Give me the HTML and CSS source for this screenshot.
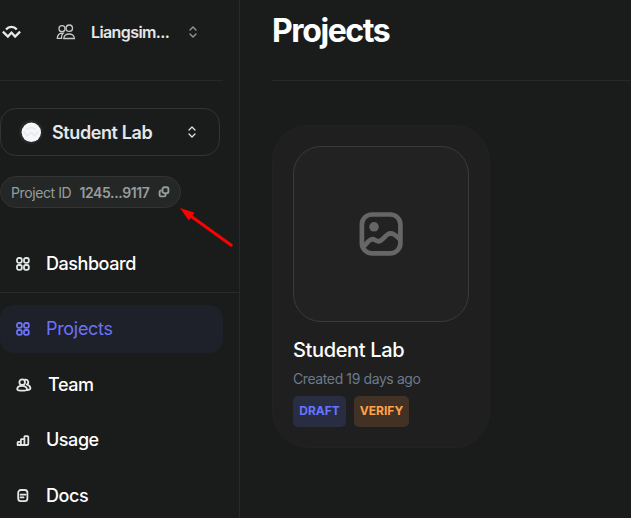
FILE: index.html
```html
<!DOCTYPE html>
<html lang="en">
<head>
<meta charset="utf-8">
<title>Projects</title>
<link rel="stylesheet" href="styles.css">
</head>
<body>
<svg class="defs" aria-hidden="true">
  <symbol id="updown" viewBox="0 0 8 12"><path d="M1 4 4 1l3 3M1 8l3 3 3-3"/></symbol>
  <symbol id="grid" viewBox="0 0 14 14"><rect x="1" y="1" width="4.8" height="4.8" rx="1.8"/><rect x="8" y="1" width="4.8" height="4.8" rx="1.8"/><rect x="1" y="8" width="4.8" height="4.8" rx="1.8"/><rect x="8" y="8" width="4.8" height="4.8" rx="1.8"/></symbol>
</svg>
<div class="app">
  <aside class="sidebar">
    <div class="account">
      <svg class="logo" viewBox="0 0 20 14"><path d="M5 4.5c3-3.600 7.800-3.600 10.800 0M1.900 6.600l5 5 3.600-4 3.600 4 5-5"/></svg>
      <svg class="people" viewBox="0 0 20 16"><circle cx="6" cy="4.7" r="3"/><circle cx="13.3" cy="4.2" r="3.2"/><path d="M7.800 14.500c0-6 10.600-6 10.600 0zM5.500 14.300H1.300c0-3.300 1.800-5.300 5.800-5.100-1.400 1.200-1.800 3.300-1.600 5.100z"/></svg>
      <span class="account-name">Liangsim...</span>
      <svg class="updown dim"><use href="#updown"/></svg>
    </div>
    <div class="selector">
      <svg class="avatar" viewBox="0 0 24 24"><circle class="ring" cx="12" cy="12" r="12"/><circle class="disc" cx="12.3" cy="12.3" r="9.7"/><path d="M7.5 9.7c2.6-2.6 6.4-2.6 9 0M4.5 11.5l4.2 4.2 3.3-3.2 3.3 3.2 4.2-4.2"/></svg>
      <span class="selector-name">Student Lab</span>
      <svg class="updown"><use href="#updown"/></svg>
    </div>
    <div class="pill">
      <span class="pill-label">Project ID</span>
      <span class="pill-value">1245...9117</span>
      <svg class="copy" viewBox="0 0 12 12"><rect x="4.5" y="1.3" width="5.900" height="5.900" rx="1.7"/><path d="M3.700 4.400H3.100A1.500 1.500 0 0 0 1.600 5.900v3a1.500 1.500 0 0 0 1.500 1.500h3A1.500 1.500 0 0 0 7.600 8.900v-1"/></svg>
      <svg class="arrow" viewBox="0 0 54 40"><path class="shaft" d="M51.300 37.200 11 8.200"/><path class="head" d="M0 0 14.500 4.800 8.800 12.500z"/></svg>
    </div>
    <div class="nav-top">
      <a class="item"><svg class="icon"><use href="#grid"/></svg><span class="label">Dashboard</span></a>
    </div>
    <nav class="nav">
      <a class="item active"><svg class="icon"><use href="#grid"/></svg><span class="label">Projects</span></a>
      <a class="item team"><svg class="icon wide" viewBox="0 0 16 14"><circle cx="6.2" cy="4.2" r="2.8"/><path d="M1.2 11.2c0-4.5 9.8-4.5 9.8 0 0 2-9.8 2-9.8 0zM9 1.6c3-.5 4.600 3.300 1.800 4.900 2.700.8 3.600 2.200 3.600 3.800 0 1-1 1.500-2.600 1.700"/></svg><span class="label">Team</span></a>
      <a class="item usage"><svg class="icon" viewBox="0 0 14 14"><path d="M1.600 12V9.500q0-.6.6-.6h2.700V6.800q0-.6.6-.6h2.900V3.700q0-.6.6-.6h2.400q.9 0 .9.9v7.100q0 .9-.9.9zM4.900 9v3M8.400 6.200V12"/></svg><span class="label">Usage</span></a>
      <a class="item docs"><svg class="icon" viewBox="0 0 14 14"><rect x="2.200" y="1" width="9.200" height="11.200" rx="2.600"/><path d="M4.500 5.700h5M4.500 8.400h3"/></svg><span class="label">Docs</span></a>
    </nav>
  </aside>
  <main class="main">
    <header class="header"><h1>Projects</h1></header>
    <article class="card">
      <div class="thumb">
        <svg class="image-icon" viewBox="0 0 44 44"><rect x="2.900" y="2.500" width="38.500" height="38.800" rx="10"/><circle cx="15" cy="14.800" r="4.800"/><path d="M3.400 36c3.500-3 6-8.500 10-8.800 2.500 0 4 2.500 6.500 2.200C24.400 28.500 26.900 21.500 31.400 21.400c4 0 6.500 3 9.600 6.100"/></svg>
      </div>
      <h2>Student Lab</h2>
      <p class="created">Created 19 days ago</p>
      <div class="tags"><span class="tag draft">DRAFT</span><span class="tag verify">VERIFY</span></div>
    </article>
  </main>
</div>
</body>
</html>
```
FILE: styles.css
```css
* { box-sizing: border-box; }
body {
  margin: 0;
  background: #1a1c1b;
  color: #fff;
  font-family: Inter, "Liberation Sans", sans-serif;
  overflow: hidden;
}
svg { flex: none; fill: none; stroke: currentColor; }
.defs { position: absolute; width: 0; height: 0; }
.app { display: flex; height: 518px; }
.sidebar { width: 240px; flex: none; border-right: 1px solid #282a29; }

.account {
  display: flex;
  align-items: center;
  width: 223px;
  height: 81px;
  padding: 0 0 17px 1px;
  border-bottom: 1px solid #272928;
}
.logo { width: 20px; height: 14px; color: #e8eaea; stroke-width: 2.3; }
.people { width: 20px; height: 16px; margin-left: 35px; color: #c5c9c9; stroke-width: 1.3; }
.account-name { width: 97px; margin-left: 15px; font-size: 16px; font-weight: 600; color: #e4e7e7; letter-spacing: -0.6px; }
.updown { width: 8px; height: 12px; color: #dfe2e2; stroke-width: 1.3; stroke-linecap: round; stroke-linejoin: round; }
.dim { color: #949e9e; margin-left: 1px; }

.selector {
  display: flex;
  align-items: center;
  width: 220px;
  height: 48px;
  margin-top: 27px;
  padding: 0 23px 0 18px;
  border: 1px solid #313433;
  border-radius: 16px;
}
.selector .updown { margin-left: auto; }
.avatar { width: 24px; height: 24px; }
.avatar .ring { fill: #252726; stroke: none; }
.avatar .disc { fill: #f5f7fa; stroke: none; }
.avatar path { stroke: #e9ebee; stroke-width: 2; }
.selector-name { margin-left: 9px; font-size: 18px; font-weight: 600; color: #e4e7e7; letter-spacing: -0.4px; }

.pill {
  position: relative;
  display: flex;
  align-items: center;
  width: 181px;
  height: 32px;
  margin-top: 20px;
  padding-left: 10px;
  border: 1px solid #313433;
  border-radius: 16px;
  background: #252726;
  font-size: 14px;
  letter-spacing: -0.4px;
  color: #949e9e;
}
.pill-label { width: 68.5px; font-weight: 400; }
.pill-value { width: 78.5px; font-weight: 600; }
.copy { width: 12px; height: 12px; stroke-width: 1.9; }
.arrow { position: absolute; left: 179px; top: 31px; width: 54px; height: 40px; color: #f00; }
.arrow .shaft { stroke-width: 3; stroke-linecap: round; }
.arrow .head { fill: #f00; stroke: none; }

.nav-top { height: 85px; padding-top: 32px; border-bottom: 1px solid #292b2a; }
.nav { padding-top: 12px; }
.item {
  display: flex;
  align-items: center;
  width: 223px;
  height: 48px;
  padding-left: 16px;
  font-size: 18px;
  font-weight: 500;
  letter-spacing: -0.45px;
}
.label { padding-bottom: 2px; }
.icon { width: 14px; height: 14px; margin-right: 16px; color: #e4e7e7; stroke-width: 1.8; stroke-linejoin: round; stroke-linecap: round; }
.wide { width: 16px; }
.active { background: #1e202a; border-radius: 14px; color: #6a73fa; font-weight: 400; letter-spacing: -0.3px; }
.active .icon { color: #6a73fa; }
.team { margin-top: 8px; }
.usage { margin-top: 7px; }
.docs { margin-top: 8px; }

.main { flex: 1; padding-left: 32px; }
.header { height: 81px; border-bottom: 1px solid #272928; }
h1 { margin: 0; padding-top: 11px; font-size: 32px; line-height: 40px; font-weight: 700; letter-spacing: -1.4px; }
.card {
  width: 218px;
  height: 323px;
  margin-top: 44px;
  padding: 20px;
  border: 1px solid #212322;
  border-radius: 36px;
  background: #1f1f1f;
}
.thumb {
  display: flex;
  align-items: center;
  justify-content: center;
  width: 176px;
  height: 176px;
  border: 1px solid #3b3b3b;
  border-radius: 28px;
  background: #222;
}
.image-icon { width: 44px; height: 44px; color: #666; stroke-width: 4.7; }
.image-icon circle { fill: currentColor; stroke: none; }
h2 { margin: 15px 0 0; font-size: 20px; line-height: 26px; font-weight: 500; letter-spacing: -0.35px; }
.created { margin: 6px 0 0; font-size: 14px; line-height: 20px; color: #6b7a8d; letter-spacing: -0.4px; }
.tags { display: flex; gap: 8px; margin-top: 7px; }
.tag { height: 31px; line-height: 30px; border-radius: 5px; font-size: 12px; font-weight: 700; text-align: center; }
.draft { width: 53px; background: #292d42; color: #6675ff; }
.verify { width: 55px; background: #423226; color: #ffa348; }
```
